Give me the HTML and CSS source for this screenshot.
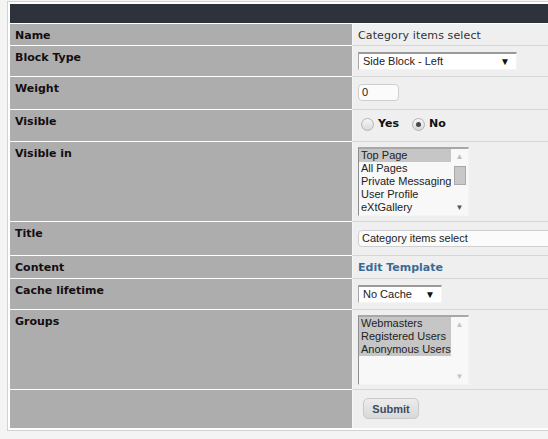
FILE: index.html
```html
<!DOCTYPE html>
<html>
<head>
<meta charset="utf-8">
<link rel="stylesheet" href="styles.css">
</head>
<body>
<div class="frame">
<table class="outer">
  <colgroup><col class="c-left"><col class="c-right"></colgroup>
  <tr class="r-head"><th class="head-bar" colspan="2"></th></tr>
  <tr class="r-name">
    <td class="head">Name</td>
    <td class="even p5"><span class="plain">Category items select</span></td>
  </tr>
  <tr class="r-block">
    <td class="head">Block Type</td>
    <td class="even p6"><div class="select sel-block"><span>Side Block - Left</span><span class="arrow">▼</span></div></td>
  </tr>
  <tr class="r-weight">
    <td class="head">Weight</td>
    <td class="even p7"><div class="input in-weight">0</div></td>
  </tr>
  <tr class="r-visible">
    <td class="head">Visible</td>
    <td class="even p8">
      <div class="radios">
        <span class="radio"></span><span class="rlabel">Yes</span>
        <span class="radio checked"></span><span class="rlabel">No</span>
      </div>
    </td>
  </tr>
  <tr class="r-visin">
    <td class="head">Visible in</td>
    <td class="even p5">
      <div class="listbox">
        <div class="items">
          <div class="opt sel">Top Page</div>
          <div class="opt">All Pages</div>
          <div class="opt">Private Messaging</div>
          <div class="opt">User Profile</div>
          <div class="opt">eXtGallery</div>
        </div>
        <div class="sbar">
          <span class="sarrow up">▲</span>
          <span class="thumb"></span>
          <span class="sarrow down dark">▼</span>
        </div>
      </div>
    </td>
  </tr>
  <tr class="r-title">
    <td class="head">Title</td>
    <td class="even p8"><div class="input in-title">Category items select</div></td>
  </tr>
  <tr class="r-content">
    <td class="head">Content</td>
    <td class="even p5"><a class="link" href="#">Edit Template</a></td>
  </tr>
  <tr class="r-cache">
    <td class="head">Cache lifetime</td>
    <td class="even p6"><div class="select sel-cache"><span>No Cache</span><span class="arrow">▼</span></div></td>
  </tr>
  <tr class="r-groups">
    <td class="head">Groups</td>
    <td class="even p5">
      <div class="listbox lb-groups">
        <div class="items">
          <div class="opt sel">Webmasters</div>
          <div class="opt sel">Registered Users</div>
          <div class="opt sel">Anonymous Users</div>
        </div>
        <div class="sbar sbar-empty">
          <span class="sarrow up">▲</span>
          <span class="sarrow down">▼</span>
        </div>
      </div>
    </td>
  </tr>
  <tr class="r-submit">
    <td class="head last"></td>
    <td class="even last p8"><button class="btn" type="button">Submit</button></td>
  </tr>
</table>
</div>
</body>
</html>
```
FILE: styles.css
```css
html, body {
  margin: 0;
  padding: 0;
  overflow: hidden;
  background: #f4f4f4;
  font-family: "DejaVu Sans", Verdana, sans-serif;
  font-size: 11px;
}

.frame {
  margin: 1px 0 0 7px;
  width: 538px;
  border: 1px solid #d2d2d2;
  border-right: none;
  padding: 2px 0 2px 2px;
  background: #ffffff;
}

.outer {
  border-collapse: separate;
  border-spacing: 0;
  width: 538px;
  table-layout: fixed;
}

.c-left { width: 342px; }

.outer td, .outer th {
  padding: 0;
  vertical-align: top;
}

.head-bar {
  background: #2e323a;
  border-bottom: 1px solid #ffffff;
}

.head {
  background: #adadad;
  color: #150d10;
  font-weight: bold;
  padding: 5px 0 0 5px !important;
  border-bottom: 1px solid #ffffff;
  line-height: 13px;
}

.even {
  background: #efefef;
  color: #333333;
  border-left: 1px solid #f6f6f6;
  border-bottom: 1px solid #d6d6d6;
  padding-left: 5px !important;
  line-height: 13px;
  white-space: nowrap;
  overflow: hidden;
}

.plain { letter-spacing: 0.12px; }

.last { border-bottom: none; }

.p5 { padding-top: 5px !important; }
.p6 { padding-top: 6px !important; }
.p7 { padding-top: 7px !important; }
.p8 { padding-top: 8px !important; }

.r-head { height: 20px; }
.r-name { height: 22px; }
.r-block { height: 31px; }
.r-weight { height: 33px; }
.r-visible { height: 32px; }
.r-visin { height: 80px; }
.r-title { height: 34px; }
.r-content { height: 23px; }
.r-cache { height: 31px; }
.r-groups { height: 80px; }
.r-submit { height: 38px; }

.select {
  box-sizing: border-box;
  height: 18px;
  display: flex;
  align-items: center;
  justify-content: space-between;
  background: #ffffff;
  border-style: solid;
  border-width: 2px 1px 1px 1px;
  border-color: #9a9a9a #f4f4f4 #f4f4f4 #a8a8a8;
  font-family: "Liberation Sans", Arial, sans-serif;
  font-size: 11px;
  color: #222222;
  padding: 0 6px 0 4px;
}
.sel-block { width: 159px; }
.sel-cache { width: 84px; }
.arrow { font-size: 10px; color: #111111; }

.input {
  box-sizing: border-box;
  height: 17px;
  background: #fbfbfb;
  border: 1px solid #cfcfcf;
  border-radius: 4px;
  font-family: "Liberation Sans", Arial, sans-serif;
  font-size: 11px;
  color: #222222;
  padding: 0 3px;
  line-height: 15px;
}
.in-weight { width: 41px; }
.in-title { width: 200px; }

.radios {
  display: flex;
  align-items: center;
  height: 13px;
  padding-left: 3px;
}
.radio {
  box-sizing: border-box;
  width: 13px;
  height: 13px;
  border-radius: 50%;
  border: 1px solid #b4b4b4;
  background: linear-gradient(#f6f6f6, #dadada);
  display: flex;
  align-items: center;
  justify-content: center;
}
.radio.checked::after {
  content: "";
  width: 5px;
  height: 5px;
  border-radius: 50%;
  background: #4a4a4a;
}
.rlabel {
  font-weight: bold;
  color: #111111;
  margin: -2px 13px 0 4px;
}

.listbox {
  box-sizing: border-box;
  width: 111px;
  height: 69px;
  display: flex;
  background: #f8f8f8;
  border-style: solid;
  border-width: 2px 1px 1px 1px;
  border-color: #a8a8a8 #f4f4f4 #f4f4f4 #8e8e8e;
  font-family: "Liberation Sans", Arial, sans-serif;
  font-size: 11px;
  color: #222222;
}
.lb-groups { height: 70px; }
.items {
  width: 92px;
  overflow: hidden;
}
.opt {
  height: 13px;
  line-height: 13px;
  padding-left: 2px;
  white-space: nowrap;
}
.opt.sel { background: #c6c6c6; }

.sbar {
  flex: 1;
  display: flex;
  flex-direction: column;
  align-items: center;
  padding-top: 3px;
}
.sarrow {
  font-size: 8px;
  line-height: 9px;
  color: #bdbdbd;
}
.sarrow.dark { color: #555555; }
.sarrow.down { margin-top: auto; margin-bottom: 3px; }
.thumb {
  box-sizing: border-box;
  width: 12px;
  height: 19px;
  margin-top: 5px;
  background: #c8c8c8;
  border: 1px solid #a9a9a9;
}
.sbar-empty .sarrow { color: #c4c4c4; }

.link {
  color: #3b6b95;
  font-weight: bold;
  text-decoration: none;
}

.btn {
  margin-left: 5px;
  box-sizing: border-box;
  width: 56px;
  height: 21px;
  border: 1px solid #c9c9c9;
  border-radius: 5px;
  background: linear-gradient(#ececec, #d8d8d8);
  color: #3c4b63;
  font-family: "Liberation Sans", Arial, sans-serif;
  font-weight: bold;
  font-size: 11px;
  padding: 0;
}
```
